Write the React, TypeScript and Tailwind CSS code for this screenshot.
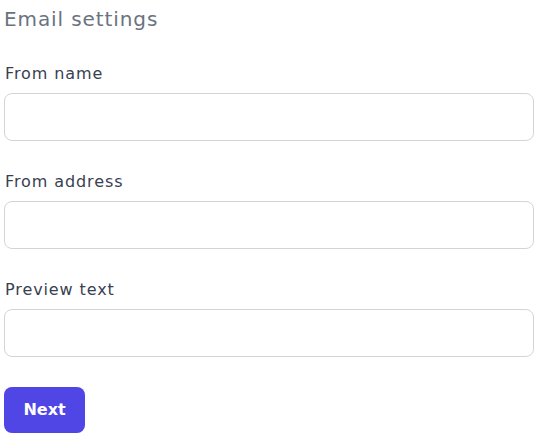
import React from "react";

const fields = ["From name", "From address", "Preview text"];

export default function App() {
  return (
    <div className="bg-white w-[545px] h-[445px] pl-1 pr-[11px] font-['DejaVu_Sans',sans-serif]">
      <h1 className="text-[20px] leading-[28px] text-[#6b7280] pt-[5px] font-normal tracking-[0.9px]">Email settings</h1>
      <div className="mt-[29px] flex flex-col gap-[29px]">
        {fields.map((f) => (
          <div key={f} className="flex flex-col">
            <label className="text-[16px] leading-[24px] text-[#374151] pl-px tracking-[0.9px]">{f}</label>
            <input
              type="text"
              className="mt-[7px] h-[48px] w-full rounded-lg border border-[#d1d5db] bg-white"
            />
          </div>
        ))}
      </div>
      <button className="mt-[30px] h-[46px] w-[81px] rounded-lg bg-[#4f46e5] text-white font-semibold text-[16px]">
        Next
      </button>
    </div>
  );
}
